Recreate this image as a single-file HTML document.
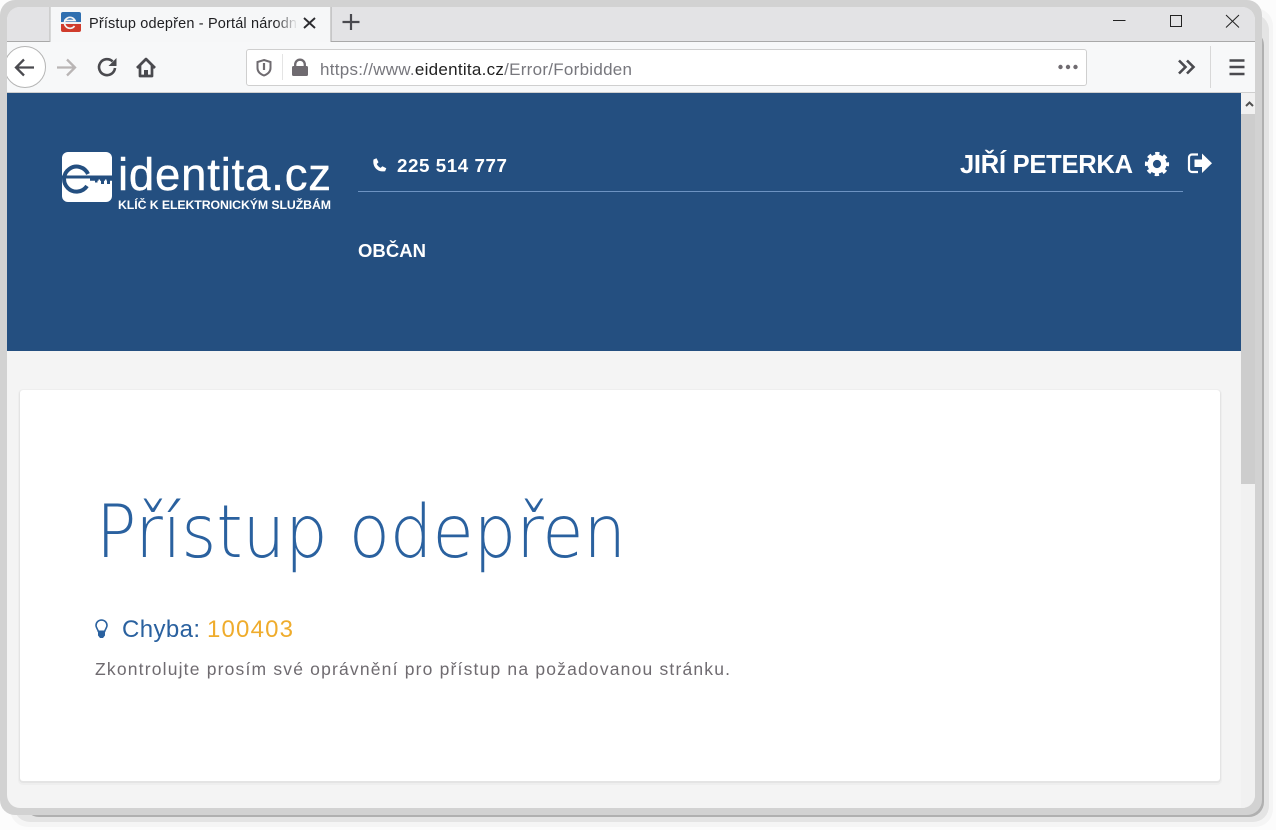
<!DOCTYPE html>
<html lang="cs">
<head>
<meta charset="utf-8">
<title>Přístup odepřen</title>
<style>
html,body{margin:0;padding:0;background:#fcfcfc;width:1276px;height:830px;overflow:hidden}
svg{display:block;position:absolute;left:0;top:0}
text{font-family:"Liberation Sans",sans-serif}
text.xl{font-family:"DejaVu Sans ExtraLight","DejaVu Sans",sans-serif;font-weight:200}
</style>
</head>
<body>
<svg width="1276" height="830" viewBox="0 0 1276 830" xmlns="http://www.w3.org/2000/svg">
<defs>
<clipPath id="win"><rect x="7" y="7" width="1248" height="801" rx="13"/></clipPath>
<linearGradient id="fade" x1="0" x2="1" y1="0" y2="0"><stop offset="0" stop-color="#f6f7f8" stop-opacity="0"/><stop offset="1" stop-color="#f6f7f8"/></linearGradient>
<clipPath id="fav"><rect x="61" y="12" width="20" height="20" rx="2"/></clipPath>
<clipPath id="logoBox"><rect x="62" y="152" width="50" height="50" rx="6"/></clipPath>
</defs>

<!-- window shadow and frame -->
<rect x="10" y="8" width="1263" height="819" rx="18" fill="#f5f5f5"/>
<rect x="14" y="14" width="1255" height="808" rx="16" fill="#e4e4e4"/>
<rect x="24" y="30" width="1240" height="787" rx="15" fill="#b0b0b0"/>
<rect x="0" y="0" width="1262" height="815" rx="15" fill="#d2d2d2"/>

<g clip-path="url(#win)">
<rect x="7" y="7" width="1248" height="801" fill="#f4f4f4"/>
<!-- title bar -->
<rect x="7" y="7" width="1248" height="35" fill="#e3e3e5"/>
<rect x="7" y="41" width="1248" height="1" fill="#a9a9a9"/>
<!-- tab -->
<rect x="50" y="7" width="281" height="35" fill="#f6f7f8"/>
<rect x="49.500" y="7" width="1" height="35" fill="#b8b8b8"/>
<rect x="330.500" y="7" width="1" height="35" fill="#a9a9a9"/>
<!-- toolbar -->
<rect x="7" y="42" width="1248" height="50" fill="#f7f8f9"/>
<rect x="7" y="92" width="1248" height="1" fill="#cfcfcf"/>
<!-- page -->
<rect x="7" y="93" width="1234" height="258" fill="#244f80"/>
<rect x="1241" y="93" width="14" height="715" fill="#f1f1f1"/>
<rect x="1241" y="114" width="14" height="370" fill="#cdcdcd"/>
<path d="M1246 106l3.500-3.500 3.500 3.500" fill="none" stroke="#505050" stroke-width="2"/>
</g>

<!-- favicon -->
<g clip-path="url(#fav)">
<rect x="61" y="12" width="20" height="10" fill="#2f6fb0"/>
<rect x="61" y="22" width="20" height="2" fill="#eef0f3"/>
<rect x="61" y="24" width="20" height="8" fill="#d03c2c"/>
<path d="M74.500 26a5.500 5.500 0 1 1 .5-5.500H64" fill="none" stroke="#f4f4f4" stroke-width="1.700"/>
</g>

<!-- tab text -->
<text x="89" y="28" font-size="14.500" fill="#1f1f22" textLength="208" lengthAdjust="spacing">Přístup odepřen - Portál národn</text>
<rect x="275" y="12" width="23" height="22" fill="url(#fade)"/>
<path d="M304 18l11 10M315 18l-11 10" stroke="#2c2c30" stroke-width="1.900" fill="none"/>
<path d="M351 14v16M342.500 22h17" stroke="#4a4a4f" stroke-width="2.200" fill="none"/>

<!-- window controls -->
<path d="M1113 20.500h12.500" stroke="#222" stroke-width="1"/>
<rect x="1170.500" y="15.500" width="11" height="11" fill="none" stroke="#222" stroke-width="1"/>
<path d="M1226 15l13 12.500M1239 15l-13 12.500" stroke="#222" stroke-width="1" fill="none"/>

<!-- back button -->
<circle cx="25" cy="67" r="20.500" fill="#fff" stroke="#b5b5b5"/>
<rect x="0" y="42" width="7" height="50" fill="#d2d2d2"/>
<path d="M16 67.500h18M24 59.500l-8 8 8 8" fill="none" stroke="#4a4a4f" stroke-width="2.300"/>
<path d="M57 67.500h18M67 59.500l8 8-8 8" fill="none" stroke="#b9b5b5" stroke-width="2.300"/>
<!-- reload -->
<path d="M115 68a8 8 0 1 1-2.400-6.600" fill="none" stroke="#4a4a4f" stroke-width="2.600"/>
<path d="M116.500 58v8h-8z" fill="#4a4a4f"/>
<!-- home -->
<path d="M137 68l9-9 9 9M140 65.500v10.500h12v-10.500" fill="none" stroke="#4a4a4f" stroke-width="2.700" stroke-linejoin="round"/>
<rect x="144" y="70" width="4" height="6" fill="#4a4a4f"/>

<!-- url bar -->
<rect x="246.500" y="49.500" width="840" height="36" rx="2.500" fill="#fff" stroke="#cfcfcf"/>
<path d="M264 60l6.500 2v6c0 3.500-2.500 6-6.500 7.500-4-1.500-6.500-4-6.500-7.500v-6z" fill="none" stroke="#6f6b70" stroke-width="2"/>
<path d="M264 63v7" stroke="#6f6b70" stroke-width="2.200"/>
<rect x="282" y="54" width="1" height="26" fill="#e4e4e4"/>
<rect x="292" y="66" width="16" height="10" rx="1.500" fill="#6f6b70"/>
<path d="M295.200 66v-1.500a4.800 4.800 0 0 1 9.600 0v1.500" fill="none" stroke="#6f6b70" stroke-width="2.300"/>
<text x="320" y="75" font-size="17" fill="#77777d" textLength="312" lengthAdjust="spacing">https://www.<tspan fill="#222">eidentita.cz</tspan>/Error/Forbidden</text>
<circle cx="1060.500" cy="67" r="2.200" fill="#6f6b70"/><circle cx="1068" cy="67" r="2.200" fill="#6f6b70"/><circle cx="1075.500" cy="67" r="2.200" fill="#6f6b70"/>

<!-- right toolbar -->
<path d="M1179 60.500l6.500 6.500-6.500 6.500M1187 60.500l6.500 6.500-6.500 6.500" fill="none" stroke="#4a4a4f" stroke-width="2.600"/>
<rect x="1210" y="46" width="1" height="42" fill="#d8d8d8"/>
<path d="M1229.500 60.500h15M1229.500 67h15M1229.500 74h15" fill="none" stroke="#4a4a4f" stroke-width="2.500"/>

<!-- logo -->
<rect x="62" y="152" width="50" height="50" rx="6" fill="#fff"/>
<g clip-path="url(#logoBox)" fill="none" stroke="#244f80">
<path d="M87 186a12.500 12.500 0 1 1 1-12" stroke-width="4"/>
<path d="M62 177h50" stroke-width="3"/>
<path d="M90 179.500h22" stroke-width="2.500"/>
</g>
<g fill="#244f80"><rect x="95" y="180" width="2.500" height="2.500"/><rect x="101" y="180" width="3" height="4"/><rect x="107" y="180" width="3" height="4"/></g>
<g fill="#fff"><rect x="98.500" y="179.500" width="1.500" height="1.500"/><rect x="105" y="179.500" width="1.500" height="1.500"/></g>
<text x="118" y="190" font-size="45.500" fill="#fff" stroke="#fff" stroke-width=".4" textLength="213" lengthAdjust="spacing">identita.cz</text>
<text x="118" y="209" font-size="12.300" font-weight="700" fill="#fff" textLength="213" lengthAdjust="spacing">KLÍČ K ELEKTRONICKÝM SLUŽBÁM</text>

<!-- header -->
<path d="M373.500 159.500l3-1.300 2 4-1.700 1.800c.8 1.800 2 3 3.800 3.900l1.800-1.700 3.900 2-1.200 3c-7.500 1.500-13-4.500-11.600-11.700z" fill="#fff"/>
<text x="397" y="172" font-size="18.800" font-weight="700" fill="#fff" textLength="110" lengthAdjust="spacing">225 514 777</text>
<rect x="358" y="191" width="825" height="1" fill="#6d93c2"/>
<text x="960" y="173" font-size="25.500" font-weight="700" fill="#fff" textLength="173" lengthAdjust="spacing">JIŘÍ PETERKA</text>
<circle cx="1157" cy="164" r="6.800" fill="none" stroke="#fff" stroke-width="5.400"/>
<circle cx="1157" cy="164" r="10.400" fill="none" stroke="#fff" stroke-width="3.400" stroke-dasharray="4.200 3.970" stroke-dashoffset="2.100"/>
<path d="M1198 154.500h-6a3 3 0 0 0-3 3v11.500a3 3 0 0 0 3 3h6" fill="none" stroke="#fff" stroke-width="2.200"/>
<path d="M1194.500 159.500h7.500v-6l10 9.800-10 9.700v-6h-7.500z" fill="#fff"/>
<text x="358" y="257" font-size="18.500" font-weight="700" fill="#fff" textLength="68" lengthAdjust="spacing">OBČAN</text>

<!-- card -->
<rect x="18" y="389" width="1204" height="396" rx="5" fill="#eeeeee"/>
<rect x="19" y="390" width="1202" height="393" rx="4" fill="#e4e4e4"/>
<rect x="20" y="390" width="1200" height="391" rx="3" fill="#fff"/>

<text class="xl" x="96" y="557" font-size="73" fill="#2a619f" textLength="530" lengthAdjust="spacingAndGlyphs">Přístup odepřen</text>

<!-- bulb -->
<path d="M101.500 620a5.500 5.500 0 0 1 5.500 5.500c0 2.200-1.700 3.500-2.300 5.800h-6.400c-.6-2.300-2.300-3.600-2.300-5.800a5.500 5.500 0 0 1 5.500-5.500z" fill="none" stroke="#2a619f" stroke-width="1.600"/>
<path d="M98 632h7v3.500l-2 2.500h-3l-2-2.500z" fill="#2a619f"/>
<text x="122" y="637" font-size="24" fill="#2a619f" textLength="78" lengthAdjust="spacing">Chyba:</text>
<text x="207" y="637" font-size="24" fill="#efac2c" textLength="86" lengthAdjust="spacing">100403</text>
<text x="95" y="675" font-size="17.500" fill="#6f6b70" textLength="635" lengthAdjust="spacing">Zkontrolujte prosím své oprávnění pro přístup na požadovanou stránku.</text>
</svg>
</body>
</html>
